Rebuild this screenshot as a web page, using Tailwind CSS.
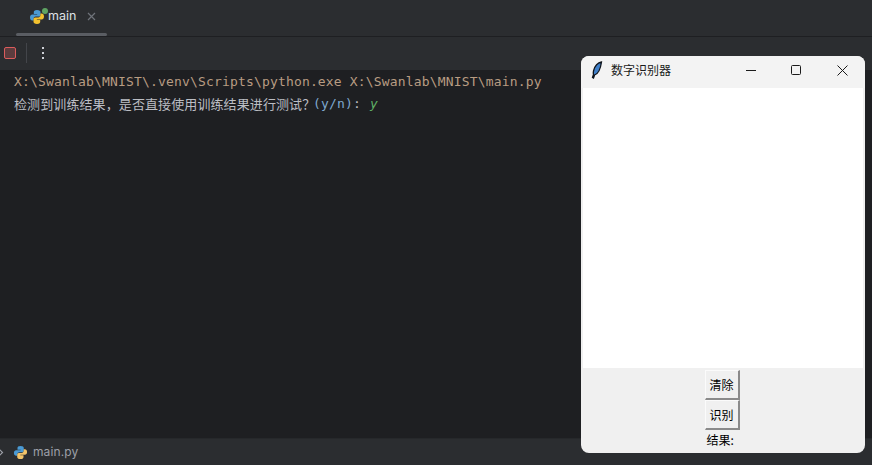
<!DOCTYPE html>
<html lang="en">

<head>
    <meta charset="UTF-8">
    <title>main</title>
    <script src="https://cdn.jsdelivr.net/npm/@tailwindcss/browser@4"></script>
</head>

<body class="bg-[#1e1f22] overflow-hidden">
    <div class="relative w-[872px] h-[465px] flex flex-col overflow-hidden">
        <!-- tool window tabs -->
        <div class="h-[37px] shrink-0 bg-[#2b2d30] border-b border-[#1e1f22] flex pl-[16px]">
            <div class="w-[91px] h-[36px] relative flex items-center pl-[13px] pb-[3px]">
                <div class="relative w-[16px] h-[16px]">
                    <svg width="16" height="16" viewBox="0 0 16 16">
                        <path d="M8 1C5.500 1 4.800 2 4.800 3.200V5h3.400v.6H3.300C2 5.600 1 6.600 1 8.500S2 11.500 3.300 11.500H4.600V9.800C4.600 8.500 5.600 7.600 6.800 7.600H9.900C11 7.600 11.500 6.800 11.500 5.800V3.200C11.500 2 10.500 1 8 1Z" fill="#4a9ad4" />
                        <path d="M8 15C10.500 15 11.200 14 11.200 12.800V11H7.800V10.400H12.700C14 10.400 15 9.400 15 7.500S14 4.500 12.700 4.500H11.400V6.200C11.400 7.500 10.400 8.400 9.200 8.400H6.100C5 8.400 4.500 9.200 4.500 10.200V12.800C4.500 14 5.500 15 8 15Z" fill="#f2c12e" />
                    </svg>
                    <div class="absolute -top-[1px] -right-[3px] w-[6px] h-[6px] rounded-full bg-[#5fa463]"></div>
                </div>
                <span class="ml-[3px] text-[12.5px] text-[#dfe1e5] font-['Inter','Liberation_Sans',sans-serif]">main</span>
                <svg class="ml-[11px]" width="9" height="9" viewBox="0 0 9 9">
                    <path d="M1 1l7 7M8 1l-7 7" stroke="#6f737a" stroke-width="1.200" fill="none" />
                </svg>
                <div class="absolute left-0 right-0 bottom-0 h-[3px] rounded-full bg-[#5a5d63]"></div>
            </div>
        </div>

        <!-- run toolbar -->
        <div class="h-[33px] shrink-0 bg-[#2b2d30] flex items-center pl-[4px] pb-[1px]">
            <div class="w-[12px] h-[12px] rounded-[2px] bg-[#5c3c3e] border border-[#db5c5c]"></div>
            <div class="w-px h-[20px] bg-[#43454a] ml-[10px]"></div>
            <div class="ml-[15px] flex flex-col gap-[3px]">
                <div class="w-[2px] h-[2px] bg-[#ced0d6]"></div>
                <div class="w-[2px] h-[2px] bg-[#ced0d6]"></div>
                <div class="w-[2px] h-[2px] bg-[#ced0d6]"></div>
            </div>
        </div>

        <!-- console -->
        <div class="flex-1 bg-[#1e1f22] pt-[1px] pl-[14px] font-['DejaVu_Sans_Mono','Noto_Sans_CJK_SC',monospace] text-[13px] leading-[22px] text-[#bcbec4]">
            <div class="text-[#b89c82] tracking-[0.17px] h-[22px] whitespace-pre">X:\Swanlab\MNIST\.venv\Scripts\python.exe X:\Swanlab\MNIST\main.py</div>
            <div class="h-[22px] flex whitespace-pre tracking-[0.17px]"><span class="font-['Noto_Sans_CJK_SC',sans-serif] tracking-[0.1px] w-[299px]">检测到训练结果，是否直接使用训练结果进行测试？</span><span class="text-[#7fa8cf]">(y/n)</span><span>: </span><span class="italic text-[#5fad65] ml-[1px]">y</span></div>
        </div>

        <!-- status bar -->
        <div class="h-[27px] shrink-0 bg-[#2b2d30] border-t border-[#26282b] flex items-center">
            <svg class="-ml-[2px]" width="6" height="9" viewBox="0 0 6 9">
                <path d="M1 1l3.500 3.500L1 8" stroke="#9da0a8" stroke-width="1.200" fill="none" />
            </svg>
            <svg class="ml-[9px]" width="15" height="15" viewBox="0 0 16 16">
                <path d="M8 1C5.500 1 4.800 2 4.800 3.200V5h3.400v.6H3.300C2 5.600 1 6.600 1 8.500S2 11.500 3.300 11.500H4.600V9.800C4.600 8.500 5.600 7.600 6.800 7.600H9.900C11 7.600 11.500 6.800 11.500 5.800V3.200C11.500 2 10.500 1 8 1Z" fill="#4a9ad4" />
                <path d="M8 15C10.500 15 11.200 14 11.200 12.800V11H7.800V10.400H12.700C14 10.400 15 9.400 15 7.500S14 4.500 12.700 4.500H11.400V6.200C11.400 7.500 10.400 8.400 9.200 8.400H6.100C5 8.400 4.500 9.200 4.500 10.200V12.800C4.500 14 5.500 15 8 15Z" fill="#f2c46a" />
            </svg>
            <span class="ml-[5px] text-[12px] text-[#9da0a8] tracking-[0.1px] font-['Inter','Liberation_Sans',sans-serif]">main.py</span>
        </div>

        <!-- tk window -->
        <div class="absolute left-[581px] top-[56px] w-[284px] h-[397px] rounded-[8px] bg-[#f0f0f0] overflow-hidden flex flex-col font-['Noto_Sans_CJK_SC',sans-serif] text-black">
            <div class="h-[32px] shrink-0 bg-[#f3f3f3] flex items-center pl-[10px] pb-[5px] pt-[1px]">
                <svg width="12" height="18" viewBox="0 0 12 18">
                    <path d="M10.500 1C7 1.500 3.500 5 2.500 10C2.200 11.500 2.200 12.500 2.500 13.500L1.500 16.500L2.500 17L3.600 14C7 13 9.500 8 10.500 1Z" fill="#3f7fc8" stroke="#10151c" stroke-width="1.300" />
                </svg>
                <span class="ml-[8px] text-[12px] text-[#1a1a1a]">数字识别器</span>
                <svg class="ml-[75px]" width="10" height="10" viewBox="0 0 10 10">
                    <path d="M0 5.500H10" stroke="#1a1a1a" stroke-width="1" fill="none" />
                </svg>
                <svg class="ml-[35px]" width="10" height="10" viewBox="0 0 10 10">
                    <rect x="0.500" y="0.500" width="9" height="9" rx="1" stroke="#1a1a1a" stroke-width="1" fill="none" />
                </svg>
                <svg class="ml-[36px]" width="11" height="11" viewBox="0 0 11 11">
                    <path d="M0.500 0.500l10 10M10.500 0.500l-10 10" stroke="#1a1a1a" stroke-width="1" fill="none" />
                </svg>
            </div>
            <div class="h-[280px] mx-[2px] shrink-0 bg-white"></div>
            <div class="flex-1 flex flex-col items-center pt-[2px] pr-[2px]">
                <button class="w-[35px] h-[30px] bg-[#f0f0f0] border border-[#fbfbfb] border-r-[#8a8a8a] border-b-[#8a8a8a] border-r-2 border-b-2 text-[12px] leading-none">清除</button>
                <button class="w-[35px] h-[30px] bg-[#f0f0f0] border border-[#fbfbfb] border-r-[#8a8a8a] border-b-[#8a8a8a] border-r-2 border-b-2 text-[12px] leading-none">识别</button>
                <div class="w-[35px] text-[12px] leading-[17px] mt-[1px] pl-[2px] whitespace-pre">结果:</div>
            </div>
        </div>
    </div>
</body>

</html>
